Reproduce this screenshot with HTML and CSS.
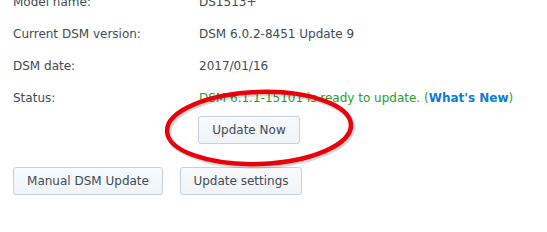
FILE: index.html
```html
<!DOCTYPE html>
<html lang="en">
<head>
    <meta charset="UTF-8">
    <title>DSM Update</title>
    <link rel="stylesheet" href="styles.css">
</head>
<body>
    <div class="panel">
        <!-- Info rows -->
        <div class="info">
            <div class="row"><span class="label">Model name:</span><span class="value">DS1513+</span></div>
            <div class="row"><span class="label">Current DSM version:</span><span class="value">DSM 6.0.2-8451 Update 9</span></div>
            <div class="row"><span class="label">DSM date:</span><span class="value">2017/01/16</span></div>
            <div class="row"><span class="label">Status:</span><span class="value status">DSM 6.1.1-15101 is ready to update. (<a href="#" class="whats-new">What's New</a>)</span></div>
        </div>
        <div class="update-now">
            <button class="btn">Update Now</button>
        </div>
        <div class="actions">
            <button class="btn btn-manual">Manual DSM Update</button>
            <button class="btn btn-settings">Update settings</button>
        </div>
    </div>

    <!-- Red highlight drawn over the screenshot -->
    <svg class="highlight" width="547" height="232" viewBox="0 0 547 232">
        <ellipse cx="259" cy="128" rx="92" ry="36" fill="none" stroke="rgba(0,0,0,0.15)" stroke-width="5" transform="translate(1.5 2) rotate(-2 259 128)"/>
        <ellipse cx="259" cy="128" rx="92" ry="36" fill="none" stroke="#e8000b" stroke-width="4.5" transform="rotate(-2 259 128)"/>
    </svg>
</body>
</html>
```

FILE: styles.css
```css
body {
    margin: 0;
    background-color: #fff;
    font-family: "DejaVu Sans", Verdana, sans-serif;
    font-size: 12px;
    color: #414b55;
    overflow: hidden;
}
.panel {
    padding-left: 13px;
    margin-top: -14px;
}
.row {
    display: flex;
    height: 32px;
    line-height: 32px;
}
.label {
    width: 186px;
}
.status {
    color: #25a02b;
}
.whats-new {
    color: #0c7cd5;
    font-weight: bold;
    text-decoration: none;
}
.update-now {
    padding-left: 185px;
    margin-top: 2px;
}
.btn {
    font-family: inherit;
    font-size: 12px;
    color: #414b55;
    height: 28px;
    padding: 0;
    white-space: nowrap;
    background: linear-gradient(#f8fafc, #f0f4f8);
    border: 1px solid #c5d0dc;
    border-radius: 3px;
}
.update-now .btn {
    width: 102px;
}
.actions {
    display: flex;
    gap: 17px;
    margin-top: 23px;
}
.btn-manual {
    width: 150px;
}
.btn-settings {
    width: 122px;
}
.highlight {
    position: absolute;
    left: 0;
    top: 0;
    pointer-events: none;
}
```
